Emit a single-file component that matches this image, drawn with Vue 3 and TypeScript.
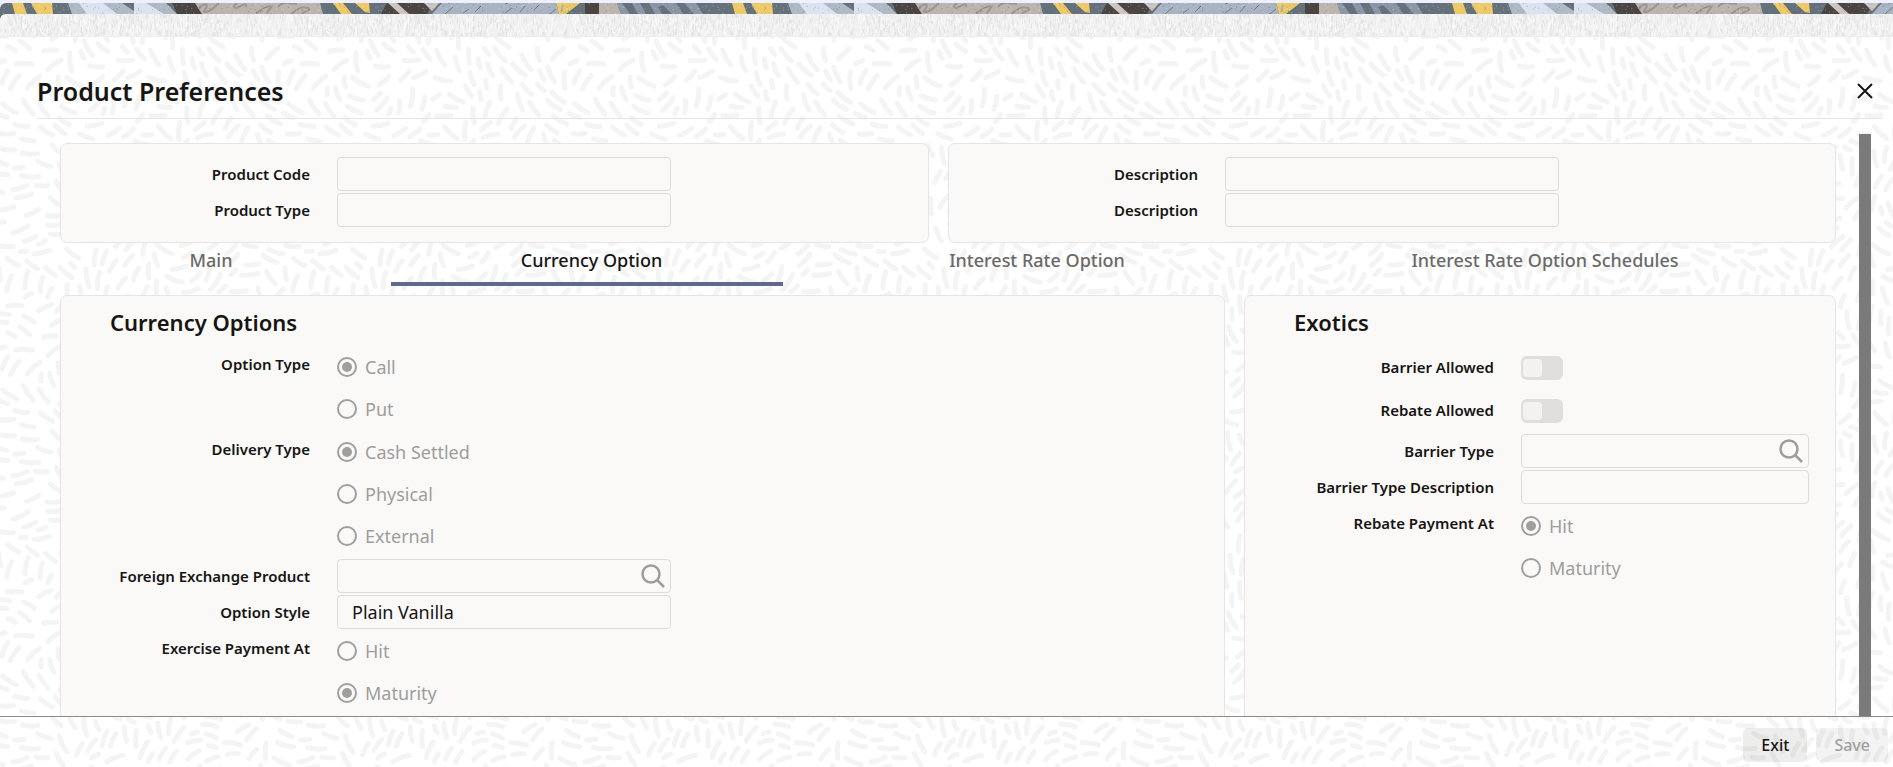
<script setup lang="ts">
import { ref } from 'vue'

interface Stroke { d: string; w: number; c: string }
interface Field {
  id: string
  label: string
  kind: 'text' | 'search' | 'radio' | 'switch'
  value?: string
  options?: string[]
}

const tabs = ['Main', 'Currency Option', 'Interest Rate Option', 'Interest Rate Option Schedules']
const activeTab = ref('Currency Option')

const productFields: Field[] = [
  { id: 'product-code', label: 'Product Code', kind: 'text' },
  { id: 'product-type', label: 'Product Type', kind: 'text' },
]
const descriptionFields: Field[] = [
  { id: 'code-description', label: 'Description', kind: 'text' },
  { id: 'type-description', label: 'Description', kind: 'text' },
]
const currencyFields: Field[] = [
  { id: 'option-type', label: 'Option Type', kind: 'radio', value: 'Call', options: ['Call', 'Put'] },
  { id: 'delivery-type', label: 'Delivery Type', kind: 'radio', value: 'Cash Settled', options: ['Cash Settled', 'Physical', 'External'] },
  { id: 'fx-product', label: 'Foreign Exchange Product', kind: 'search' },
  { id: 'option-style', label: 'Option Style', kind: 'text', value: 'Plain Vanilla' },
  { id: 'exercise-payment', label: 'Exercise Payment At', kind: 'radio', value: 'Maturity', options: ['Hit', 'Maturity'] },
]
const exoticFields: Field[] = [
  { id: 'barrier-allowed', label: 'Barrier Allowed', kind: 'switch' },
  { id: 'rebate-allowed', label: 'Rebate Allowed', kind: 'switch' },
  { id: 'barrier-type', label: 'Barrier Type', kind: 'search' },
  { id: 'barrier-description', label: 'Barrier Type Description', kind: 'text' },
  { id: 'rebate-payment', label: 'Rebate Payment At', kind: 'radio', value: 'Hit', options: ['Hit', 'Maturity'] },
]
const cardRows = [
  { name: 'summary', cards: [{ title: '', fields: productFields }, { title: '', fields: descriptionFields }] },
  { name: 'details', cards: [{ title: 'Currency Options', fields: currencyFields }, { title: 'Exotics', fields: exoticFields }] },
]

/* Small seeded generator so the decorative textures are stable between loads. */
function seeded(seed: number) {
  let s = seed
  return () => {
    s = (s * 16807) % 2147483647
    return s / 2147483647
  }
}

/* Rounded dashes following a swirling field; wraps at the tile edges. */
function dashes(tile: number): Stroke[] {
  const rnd = seeded(77)
  const placed: { x: number; y: number; a: number; l: number }[] = []
  const wrap = (v: number) => v - tile * Math.round(v / tile)
  const k = (2 * Math.PI) / tile
  for (let i = 0; i < 9000; i++) {
    const x = rnd() * tile
    const y = rnd() * tile
    const a = 1.1 * Math.sin(k * (x + y)) + 0.9 * Math.cos(k * (2 * x - y)) + 0.7 * Math.sin(k * 2 * y) + 1.1 + (rnd() - 0.5) * 0.3
    const l = (i < 3000 ? 6 : 3) + rnd() * 3
    const free = placed.every(p => {
      for (let t = -1; t <= 1; t += 0.5) {
        for (let u = -1; u <= 1; u += 0.5) {
          const dx = wrap(x + Math.cos(a) * l * t - p.x - Math.cos(p.a) * p.l * u)
          const dy = wrap(y + Math.sin(a) * l * t - p.y - Math.sin(p.a) * p.l * u)
          if (dx * dx + dy * dy < 62) return false
        }
      }
      return true
    })
    if (free) placed.push({ x, y, a, l })
  }
  const out: Stroke[] = []
  for (const p of placed) {
    for (const ox of [-tile, 0, tile]) {
      for (const oy of [-tile, 0, tile]) {
        const x = p.x + ox
        const y = p.y + oy
        if (x < -12 || x > tile + 12 || y < -12 || y > tile + 12) continue
        const dx = Math.cos(p.a) * p.l
        const dy = Math.sin(p.a) * p.l
        const bx = x - dy * 0.2
        const by = y + dx * 0.2
        out.push({
          d: `M${(x - dx).toFixed(1)} ${(y - dy).toFixed(1)}Q${bx.toFixed(1)} ${by.toFixed(1)} ${(x + dx).toFixed(1)} ${(y + dy).toFixed(1)}`,
          w: 5,
          c: '#f4f4f4',
        })
      }
    }
  }
  return out
}

function bristles(): Stroke[] {
  const rnd = seeded(4242)
  return Array.from({ length: 700 }, (_, i) => {
    const x = 1 + rnd() * 284
    const y = rnd() * 24 - 2
    const lean = (rnd() - 0.5) * 3
    return {
      d: `M${x.toFixed(1)} ${y.toFixed(1)}l${lean.toFixed(1)} ${(3 + rnd() * 4).toFixed(1)}`,
      w: 1,
      c: i % 2 ? '#fafafa' : '#e2e2e2',
    }
  })
}

function specks(): Stroke[] {
  const rnd = seeded(918)
  return Array.from({ length: 420 }, (_, i) => ({
    d: `M${(rnd() * 720).toFixed(1)} ${(rnd() * 11).toFixed(1)}h1`,
    w: 1,
    c: i % 2 ? '#ffffff' : '#3f464c',
  }))
}

const dashStrokes = dashes(286)
const bristleStrokes = bristles()
const speckStrokes = specks()
</script>

<template>
  <div class="page">
    <svg class="backdrop" aria-hidden="true">
      <defs>
        <pattern id="dashes" width="286" height="286" patternUnits="userSpaceOnUse">
          <path v-for="(s, i) in dashStrokes" :key="i" :d="s.d" :stroke="s.c" :stroke-width="s.w" fill="none" stroke-linecap="round" />
        </pattern>
      </defs>
      <rect width="100%" height="100%" fill="url(#dashes)" />
    </svg>

    <div class="banner">
      <svg class="banner-art" aria-hidden="true">
        <defs>
          <pattern id="mosaic" width="720" height="11" patternUnits="userSpaceOnUse">
            <rect width="720" height="11" fill="#65717b" />
            <path d="M12 0h11l4 11H15zM31 0h21l1 11H37zM333 0h10l9 11h-11zM355 0h14l1 10-5-1z" fill="#edc968" />
            <path d="M68 0h98l11 11H72z" fill="#b0bac6" />
            <path d="M79 0h24l14 11H87zM134 0h12l18 11h-30z" fill="#dbe3f0" />
            <path d="M122 0h12v8z" fill="#65717b" />
            <path d="M172 0h23l7 11h-25z" fill="#4a4541" />
            <path d="M195 0h125l3 11H202z" fill="#bbb3ad" />
            <path d="M199 6c3-5 7-6 8-3-1 3-5 6-2 6 5 0 10-5 14-9M237 0c-6 5-2 6 2 4 4-3 8-4 7 0M256 10c5-2 7-6 14-7 4 1-4 5-3 8M278 4c3-6 11-4 19-3M291 11c6-3 9-9 17-6 4 3-5 3-6 6" fill="none" stroke="#9d9690" stroke-width="2" />
            <path d="M387 0h46l-6 11h-46z" fill="#4a4541" />
            <path d="M388 0h9l12 11h-9zM424 0h15l-4 5-3 3z" fill="#cdc6c0" />
            <path d="M442 0h114l3 11H432z" fill="#a9b3c1" />
            <path d="M445 11l8-7M463 10l6-4M475 9l6-6M505 10l7-5M520 9l5-6M534 7l5-5M550 11l6-5M505 1l3-1" stroke="#6f7c8b" stroke-width="1" />
            <path d="M556 0h24l-14 11h-7z" fill="#edc968" />
            <path d="M561 9l2-7" stroke="#aeb1ae" stroke-width="2" />
            <path d="M585 0h14v11h-14z" fill="#4a4541" />
            <path d="M599 0h18l4 11h-22z" fill="#bbb5ae" />
            <path d="M617 0h89l6 11h-91z" fill="#8b96a6" />
            <path d="M622 0h10l6 11h-8zM640 0h9l6 11h-9zM658 4l5-2 9 9h-10zM676 0h8l10 11h-11zM696 0h16v11h-9z" fill="#65717b" />
            <path v-for="(s, i) in speckStrokes" :key="i" :d="s.d" :stroke="s.c" stroke-width="1" opacity="0.3" />
          </pattern>
        </defs>
        <rect width="100%" height="100%" fill="url(#mosaic)" />
      </svg>
    </div>
    <div class="strip">
      <svg class="strip-art" aria-hidden="true">
        <defs>
          <pattern id="bristles" width="286" height="24" patternUnits="userSpaceOnUse">
            <path v-for="(s, i) in bristleStrokes" :key="i" :d="s.d" :stroke="s.c" :stroke-width="s.w" />
          </pattern>
        </defs>
        <rect width="100%" height="100%" fill="url(#bristles)" />
      </svg>
    </div>

    <header class="title-bar">
      <h1>Product Preferences</h1>
      <button class="close" type="button" aria-label="Close">
        <svg width="16" height="16" viewBox="0 0 16 16" aria-hidden="true">
          <path d="M1 1l14 14M15 1L1 15" fill="none" stroke="#161513" stroke-width="2" />
        </svg>
      </button>
    </header>

    <div class="viewport">
      <main class="content">
        <template v-for="row in cardRows" :key="row.name">
          <nav v-if="row.name === 'details'" class="tabs" role="tablist">
            <button
              v-for="tab in tabs"
              :key="tab"
              type="button"
              role="tab"
              class="tab"
              :class="{ active: tab === activeTab }"
              :aria-selected="tab === activeTab"
              @click="activeTab = tab"
            >{{ tab }}</button>
          </nav>
          <div class="cards" :class="row.name">
            <section v-for="(card, c) in row.cards" :key="c" class="card">
              <h2 v-if="card.title">{{ card.title }}</h2>
              <template v-for="field in card.fields" :key="field.id">
                <div v-if="field.kind === 'radio'" class="field" role="radiogroup" :aria-labelledby="field.id">
                  <span :id="field.id" class="label">{{ field.label }}</span>
                  <div class="options">
                    <label v-for="option in field.options" :key="option" class="option">
                      <input type="radio" :name="field.id" :checked="option === field.value" disabled>
                      {{ option }}
                    </label>
                  </div>
                </div>
                <div v-else class="field" :class="field.kind">
                  <label class="label" :for="field.id">{{ field.label }}</label>
                  <input v-if="field.kind === 'switch'" :id="field.id" class="toggle" type="checkbox" role="switch" disabled>
                  <div v-else class="box">
                    <input :id="field.id" type="text" :value="field.value" readonly>
                    <button v-if="field.kind === 'search'" class="lookup" type="button" :aria-label="`Search ${field.label}`">
                      <svg width="24" height="24" viewBox="0 0 24 24" aria-hidden="true">
                        <circle cx="10" cy="10" r="8.5" fill="none" stroke="#9e9d9b" stroke-width="2.5" />
                        <path d="M16 16l7 7" stroke="#9e9d9b" stroke-width="2.5" />
                      </svg>
                    </button>
                  </div>
                </div>
              </template>
            </section>
          </div>
        </template>
      </main>
      <div class="scrollbar" />
    </div>

    <footer class="actions">
      <button type="button">Exit</button>
      <button type="button" disabled>Save</button>
    </footer>
  </div>
</template>

<style>
body { margin: 0; background: #fff; }
</style>

<style scoped>
.page {
  position: relative;
  display: flex;
  flex-direction: column;
  height: 100vh;
  overflow: hidden;
  font: 18px/24px "Noto Sans", "Open Sans", sans-serif;
  color: #161513;
}
.page > * { position: relative; flex: none; }
.page > .backdrop { position: absolute; inset: 0; width: 100%; height: 100%; }
button, input { font: inherit; color: inherit; margin: 0; }
button { border: 0; padding: 0; background: none; cursor: pointer; }

.banner { padding-top: 3px; background: #eef1fb; }
.banner-art { display: block; width: 100%; height: 11px; border-top-left-radius: 6px; }
.strip { background: #65717b; border-bottom: 1px solid #ededed; }
.strip-art { display: block; width: 100%; height: 22px; background: #f0f0f0; border-top-left-radius: 6px; }

.title-bar {
  display: flex;
  align-items: center;
  justify-content: space-between;
  height: 54px;
  margin: 27px 11px 0 37px;
  padding: 0 9px 0 0;
  border-bottom: 1px solid #e4e4e3;
}
h1 { margin: 0; font-size: 25px; line-height: 54px; font-weight: 600; }
.close { display: grid; place-items: center; width: 16px; height: 54px; }

.page > .viewport {
  display: flex;
  flex: 1 1 0;
  min-height: 0;
  padding: 15px 22px 0 0;
  overflow: hidden;
}
.content { flex: 1; min-width: 0; padding: 9px 23px 0 60px; }
.scrollbar { width: 12px; background: #7a7a7a; }

.cards { display: grid; gap: 19px; }
.cards.summary { grid-template-columns: 869fr 888fr; }
.cards.details { grid-template-columns: 1165fr 592fr; }
.card {
  box-sizing: border-box;
  min-width: 0;
  padding: 12px 26px 14px 0;
  border: 1px solid #e6e5e4;
  border-radius: 7px;
  background: #faf9f8;
}
.details .card { padding: 9px 26px 48px 0; }
h2 { margin: 0 0 6px 49px; font-size: 22px; line-height: 35px; font-weight: 600; }

.tabs {
  display: grid;
  grid-template-columns: 369fr 392fr 499fr 517fr;
  margin: 0 37px 9px -38px;
}
.tab {
  height: 43px;
  padding: 0 0 6px 9px;
  border-bottom: 4px solid transparent;
  font-weight: 500;
  color: #6a6968;
}
.tab.active { border-color: #5f688f; color: #161513; }

.field {
  display: grid;
  grid-template-columns: 249px minmax(0, 334px);
  column-gap: 27px;
  align-items: start;
}
.label { font-size: 15px; line-height: 37px; font-weight: 600; text-align: right; white-space: nowrap; }
.box { display: flex; padding: 1px 0; position: relative; }
.box input {
  box-sizing: border-box;
  width: 100%;
  height: 34px;
  padding: 0 14px;
  border: 1px solid #dddcdb;
  border-radius: 4px;
  background: transparent;
  outline: none;
}
.text, .search { height: 36px; }
.lookup { position: absolute; right: 6px; top: 6px; display: flex; }
.switch { height: 43px; align-items: center; }
.switch + .search { margin-top: 1px; }
.toggle {
  appearance: none;
  width: 42px;
  height: 24px;
  padding: 3px 2px;
  border-radius: 6px;
  background: #dfdedd;
}
.toggle::before { content: ""; display: block; width: 19px; height: 18px; border-radius: 4px; background: #f3f2f1; }

.options { padding-bottom: 1px; }
.option { display: flex; align-items: center; gap: 8px; height: 42px; color: #9e9d9b; }
.option input {
  appearance: none;
  display: grid;
  place-items: center;
  box-sizing: border-box;
  width: 20px;
  height: 20px;
  border: 2px solid #a09f9d;
  border-radius: 50%;
}
.option input:checked::before { content: ""; width: 10px; height: 10px; border-radius: 50%; background: #a09f9d; }

.actions {
  display: flex;
  justify-content: flex-end;
  gap: 9px;
  padding: 11px 5px 5px;
  border-top: 1px solid #8b8a89;
}
.actions button {
  height: 34px;
  padding: 0 18px;
  border-radius: 5px;
  background: rgba(22, 21, 19, 0.08);
  font-size: 16px;
  font-weight: 500;
}
.actions button:disabled { background: rgba(22, 21, 19, 0.05); color: #a09f9d; }
</style>
